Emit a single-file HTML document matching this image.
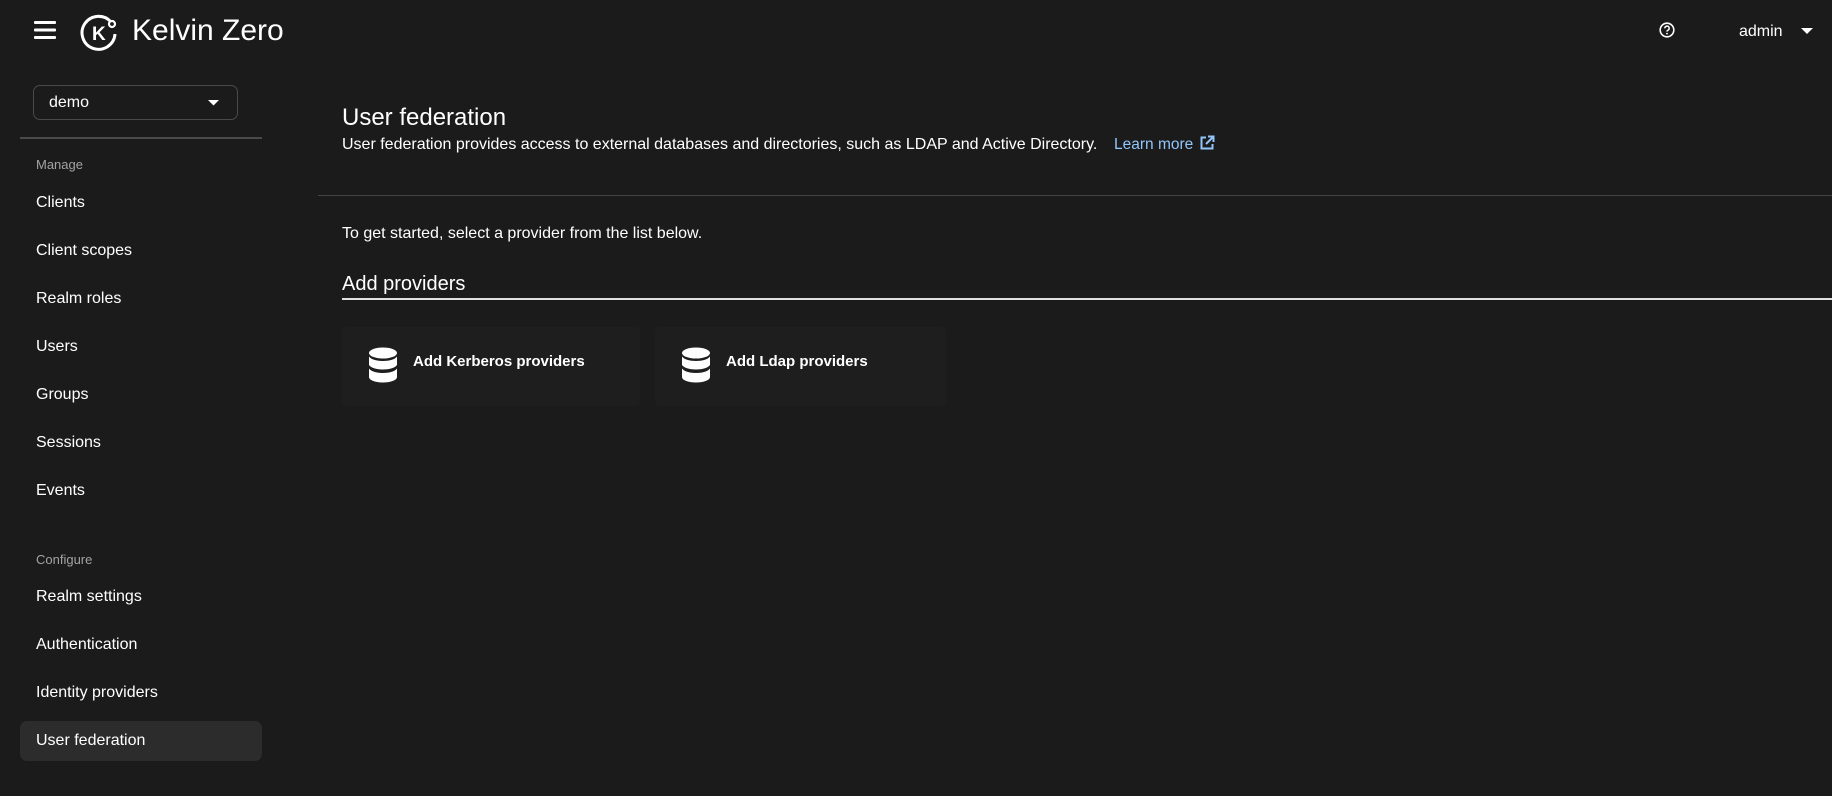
<!DOCTYPE html>
<html><head><meta charset="utf-8"><style>
*{margin:0;padding:0;box-sizing:border-box}
body{width:1832px;height:796px;background:#1b1b1b;color:#fff;font-family:"Liberation Sans",sans-serif;position:relative;overflow:hidden}
.a{position:absolute;white-space:nowrap}
.nav{position:absolute;left:36px;font-size:16px;line-height:20px}
.lbl{position:absolute;left:36px;font-size:13px;color:#a3a3a3;line-height:16px}
.card{position:absolute;top:327px;height:79px;background:#1e1e1e;border-radius:4px}
.card span{position:absolute;left:71px;top:26px;font-size:15px;font-weight:bold}
.card svg{position:absolute;left:26px;top:20px}
</style></head><body>
<svg class="a" style="left:34px;top:20px" width="22" height="20" viewBox="0 0 22 20"><rect y="1" width="22" height="3" rx="1" fill="#fff"/><rect y="8.5" width="22" height="3" rx="1" fill="#fff"/><rect y="16" width="22" height="3" rx="1" fill="#fff"/></svg>
<svg class="a" style="left:78px;top:10px" width="44" height="42" viewBox="0 0 44 42">
<path d="M33 12 A16.5 16.5 0 1 0 37 24" fill="none" stroke="#fff" stroke-width="3"/>
<circle cx="34" cy="14" r="3" fill="none" stroke="#fff" stroke-width="2.2"/>
<text x="14" y="30" font-family="Liberation Sans" font-weight="bold" font-size="19" fill="#fff">K</text></svg>
<div class="a" style="left:132px;top:13px;font-size:30px;line-height:36px">Kelvin Zero</div>
<svg class="a" style="left:1659px;top:22px" width="16" height="16" viewBox="0 0 16 16"><circle cx="8" cy="8" r="6.8" fill="none" stroke="#fff" stroke-width="1.6"/><path d="M5.8 6.3a2.2 2.2 0 1 1 3 2c-.6.3-.8.6-.8 1.3" fill="none" stroke="#fff" stroke-width="1.5"/><circle cx="8" cy="11.6" r=".9" fill="#fff"/></svg>
<div class="a" style="left:1739px;top:23px;font-size:16px">admin</div>
<svg class="a" style="left:1801px;top:28px" width="12" height="7"><path d="M0 0h12L6 6z" fill="#fff"/></svg>
<div class="a" style="left:33px;top:85px;width:205px;height:35px;border:1px solid #4a4a4a;border-radius:7px"></div>
<div class="a" style="left:49px;top:94px;font-size:16px">demo</div>
<svg class="a" style="left:208px;top:100px" width="11" height="6"><path d="M0 0h11L5.5 5.5z" fill="#fff"/></svg>
<div class="a" style="left:20px;top:137px;width:242px;height:2px;background:#4a4a4a"></div>
<div class="lbl" style="top:157px">Manage</div>
<div class="nav" style="top:193px">Clients</div>
<div class="nav" style="top:241px">Client scopes</div>
<div class="nav" style="top:289px">Realm roles</div>
<div class="nav" style="top:337px">Users</div>
<div class="nav" style="top:385px">Groups</div>
<div class="nav" style="top:433px">Sessions</div>
<div class="nav" style="top:481px">Events</div>
<div class="lbl" style="top:552px">Configure</div>
<div class="nav" style="top:587px">Realm settings</div>
<div class="nav" style="top:635px">Authentication</div>
<div class="nav" style="top:683px">Identity providers</div>
<div class="a" style="left:20px;top:721px;width:242px;height:40px;background:#2c2c2c;border-radius:7px"></div>
<div class="nav" style="top:731px">User federation</div>
<div class="a" style="left:342px;top:104px;font-size:24px;line-height:28px">User federation</div>
<div class="a" style="left:342px;top:135px;font-size:16px;line-height:20px">User federation provides access to external databases and directories, such as LDAP and Active Directory.</div>
<div class="a" style="left:1114px;top:135px;font-size:15.5px;line-height:20px;color:#92c5f9">Learn more</div>
<svg class="a" style="left:1199px;top:135px" width="16" height="16" viewBox="0 0 16 16"><path d="M7 2.5H2.5v11h11V9" fill="none" stroke="#92c5f9" stroke-width="2"/><path d="M9 1.5h5.5V7M14 2L7 9" fill="none" stroke="#92c5f9" stroke-width="2"/></svg>
<div class="a" style="left:318px;top:195px;width:1514px;height:1px;background:#444"></div>
<div class="a" style="left:342px;top:224px;font-size:16px;line-height:20px">To get started, select a provider from the list below.</div>
<div class="a" style="left:342px;top:272px;font-size:20px;line-height:24px">Add providers</div>
<div class="a" style="left:342px;top:298px;width:1490px;height:2px;background:#e0e0e0"></div>
<div class="card" style="left:342px;width:298px">
<svg width="30" height="36" viewBox="0 0 30 36"><ellipse cx="15" cy="6" rx="14" ry="5.5" fill="#fff"/><path d="M1 9.5c2 3 8 4.5 14 4.5s12-1.5 14-4.5V18c-2 3-8 4.5-14 4.5S3 21 1 18z" fill="#fff"/><path d="M1 21.5c2 3 8 4.5 14 4.5s12-1.5 14-4.5V30c0 3-6 5.5-14 5.5S1 33 1 30z" fill="#fff"/></svg>
<span>Add Kerberos providers</span></div>
<div class="card" style="left:655px;width:291px">
<svg width="30" height="36" viewBox="0 0 30 36"><ellipse cx="15" cy="6" rx="14" ry="5.5" fill="#fff"/><path d="M1 9.5c2 3 8 4.5 14 4.5s12-1.5 14-4.5V18c-2 3-8 4.5-14 4.5S3 21 1 18z" fill="#fff"/><path d="M1 21.5c2 3 8 4.5 14 4.5s12-1.5 14-4.5V30c0 3-6 5.5-14 5.5S1 33 1 30z" fill="#fff"/></svg>
<span>Add Ldap providers</span></div>
</body></html>
